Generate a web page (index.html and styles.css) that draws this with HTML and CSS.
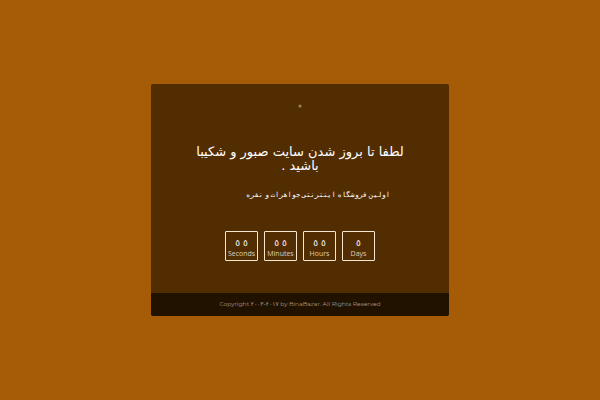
FILE: index.html
```
<!DOCTYPE html>
<html lang="fa">
<head>
<meta charset="utf-8">
<title>BinaBazar</title>
<link rel="stylesheet" href="styles.css">
</head>
<body>
<main class="card">
  <div class="content">
    <svg class="mark" viewBox="0 0 4 4" aria-hidden="true"><circle cx="2" cy="2" r="1.5"/></svg>
    <h1 class="title" dir="rtl">لطفا تا بروز شدن سایت صبور و شکیبا باشید .</h1>
    <p class="subtitle" dir="rtl">اولین فروشگاه اینترنتی جواهرات و نقره</p>
    <ul class="countdown">
      <li class="unit"><span class="number"><span>٥</span><span>٥</span></span><span class="label">Seconds</span></li>
      <li class="unit"><span class="number"><span>٥</span><span>٥</span></span><span class="label">Minutes</span></li>
      <li class="unit"><span class="number"><span>٥</span><span>٥</span></span><span class="label">Hours</span></li>
      <li class="unit"><span class="number"><span>٥</span></span><span class="label">Days</span></li>
    </ul>
  </div>
  <footer class="footer">Copyright <bdo class="years" dir="ltr">۲۰۰۳-۲۰۱۷</bdo> by BinaBazar. All Rights Reserved</footer>
</main>
</body>
</html>
```
FILE: styles.css
```
* { box-sizing: border-box; }
body {
  margin: 0;
  min-height: 100vh;
  display: flex;
  align-items: center;
  justify-content: center;
  background: #a65c07;
  color: #fff;
  font-family: "DejaVu Sans", sans-serif;
}
.card {
  width: 100%;
  max-width: 298px;
  border-radius: 2px;
  overflow: hidden;
  background: #532d02;
}
.content {
  display: flex;
  flex-direction: column;
  align-items: center;
  padding: 20px 40px 32px;
}
.mark { width: 4px; height: 4px; fill: #a08258; }
.title {
  margin: 37px 0 0;
  font-size: 13px;
  line-height: 14px;
  font-weight: 400;
  text-align: center;
}
.subtitle {
  align-self: stretch;
  margin: 15px 0 0;
  padding-right: 19px;
  font-family: "Open Sans", "DejaVu Sans Mono", monospace;
  font-size: 7px;
  line-height: 14px;
}
.countdown {
  display: flex;
  gap: 6px;
  margin: 29px 0 0;
  padding: 0;
  list-style: none;
}
.unit {
  width: 33px;
  height: 30px;
  padding-top: 5px;
  display: flex;
  flex-direction: column;
  align-items: center;
  border: 1px solid #f5e6d0;
  border-radius: 1px;
}
.number {
  display: flex;
  gap: 3px;
  font-size: 9px;
  line-height: 12px;
}
.label {
  font-family: "Open Sans", sans-serif;
  font-size: 7px;
  line-height: 10px;
  color: #ddd0be;
}
.footer {
  padding: 5px 0 6px;
  background: #211200;
  color: #a69c91;
  font-family: Montserrat, "Open Sans", sans-serif;
  font-size: 6px;
  line-height: 12px;
  text-align: center;
}
.years { font-family: "DejaVu Sans", sans-serif; }
```
